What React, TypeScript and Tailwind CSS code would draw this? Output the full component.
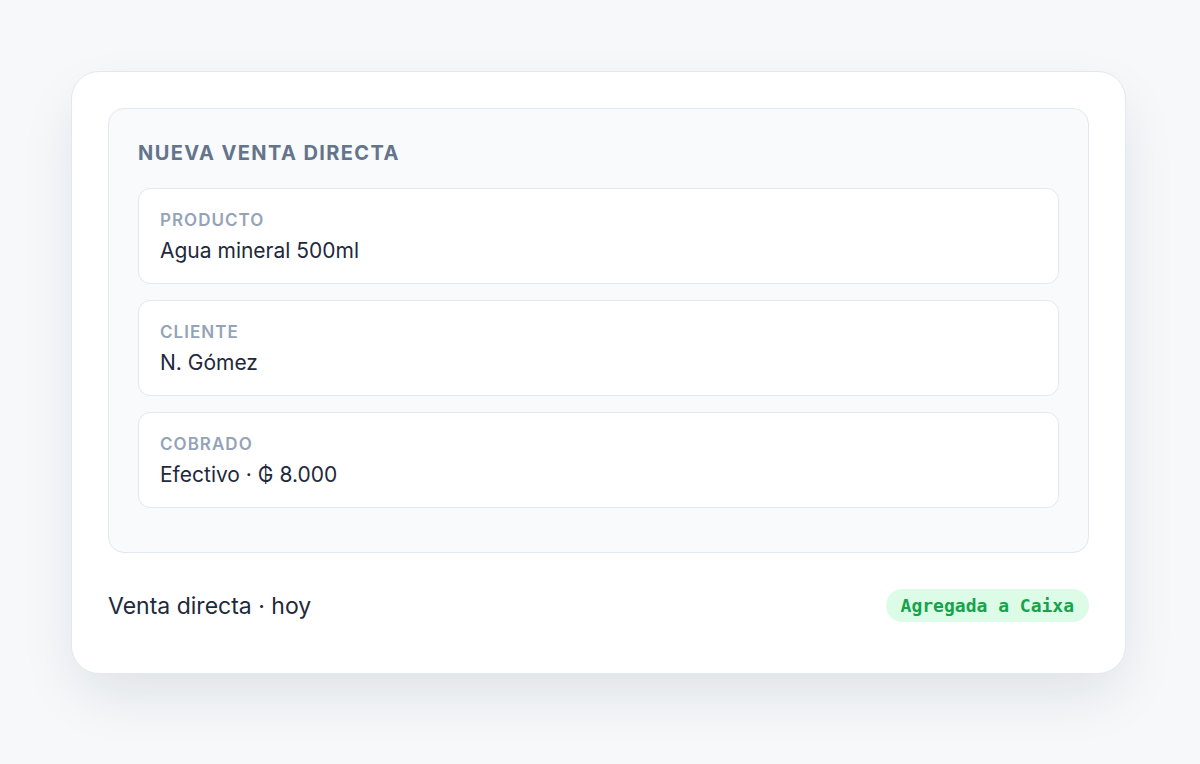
import React from "react";

type Field = { label: string; value: string };

const fields: Field[] = [
  { label: "Producto", value: "Agua mineral 500ml" },
  { label: "Cliente", value: "N. Gómez" },
  { label: "Cobrado", value: "Efectivo · ₲ 8.000" },
];

function FieldBox({ label, value }: Field) {
  return (
    <div className="rounded-[12px] border border-[#e2e8f0] bg-white px-[21px] pt-[21px] pb-[18px]">
      <div className="text-[17px] leading-[20px] font-semibold uppercase tracking-[0.06em] text-[#94a3b8]">
        {label}
      </div>
      <div className="mt-[7px] text-[21px] leading-[28px] text-[#1e293b]">{value}</div>
    </div>
  );
}

export default function App() {
  return (
    <div
      className="min-h-screen bg-[#f6f8fa] pt-[71px] pl-[71px]"
      style={{ fontFamily: "Inter, 'Noto Sans', sans-serif" }}
    >
      <div className="w-[1055px] rounded-[28px] border border-[#e2e8f0] bg-white p-[36px] pb-[35px] shadow-[0_24px_60px_-8px_rgba(15,23,42,0.11)]">
        <div className="rounded-[16px] border border-[#e2e8f0] bg-[#f8fafc] px-[29px] pt-[30px] pb-[44px]">
          <h2 className="text-[20px] leading-[28px] font-bold uppercase tracking-[0.07em] text-[#64748b]">
            Nueva venta directa
          </h2>
          <div className="mt-[21px] flex flex-col gap-[16px]">
            {fields.map((f) => (
              <FieldBox key={f.label} {...f} />
            ))}
          </div>
        </div>
        <div className="mt-[20px] flex items-center justify-between py-[16px]">
          <span className="text-[23px] leading-[30px] text-[#1e293b]">Venta directa · hoy</span>
          <span
            className="rounded-full bg-[#dcfce7] px-[15px] h-[33px] flex items-center text-[18px] font-bold text-[#16a34a]"
            style={{ fontFamily: "'DejaVu Sans Mono', 'Liberation Mono', monospace" }}
          >
            Agregada a Caixa
          </span>
        </div>
      </div>
    </div>
  );
}
